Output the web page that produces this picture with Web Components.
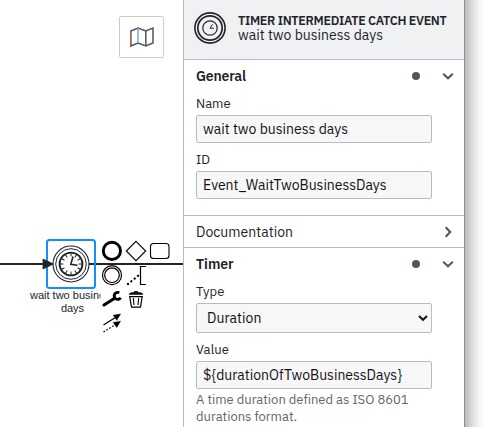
<!DOCTYPE html>
<html lang="en"><head><meta charset="utf-8"><title>Process modeler</title>
<style>
html,body{margin:0;height:100%;overflow:hidden;background:#fff}
body{font-family:"IBM Plex Sans",Roboto,"Liberation Sans",sans-serif;color:#22242a}
</style></head><body>
<modeler-app></modeler-app>
<script>
class Base extends HTMLElement{
  constructor(){super();this.attachShadow({mode:'open'}).innerHTML=this.render();}
  render(){return '';}
}
/* One line of text tracked out to a given width. */
customElements.define('fit-text',class extends Base{
  render(){return '<style>:host{display:block;white-space:pre;line-height:inherit}span{display:block;width:max-content}</style><span><slot></slot></span>';}
  connectedCallback(){
    const s=this.shadowRoot.querySelector('span'),w=+this.getAttribute('w');
    const n=this.textContent.length;
    s.style.letterSpacing=((w-s.getBoundingClientRect().width)/n)+'px';
  }
});
customElements.define('diagram-canvas',class extends Base{
  render(){return `<style>:host{display:block;position:relative;overflow:hidden}
  svg{position:absolute;left:0;top:0;display:block}
  .map{position:absolute;left:119px;top:16px;width:43px;height:40px;border:1px solid #ccc;border-radius:2px;background:#fff}
  text{font:11px "Liberation Sans",Arial,sans-serif;fill:#22242a}</style>
  <svg width="183" height="427" viewBox="0 0 183 427" fill="none" stroke="#22242a">
   <path d="M0 264H45M89 264H183" stroke-width="1.8"/>
   <circle cx="71" cy="264" r="18" fill="#fff" stroke-width="1.1"/>
   <circle cx="71" cy="264" r="15.3" stroke-width="1"/>
   <circle cx="71" cy="264" r="11.4" stroke-width="1.9"/>
   <g stroke-width="1"><path d="M71 253v3.4M71 271.6v3.4M60 264h3.4M78.6 264h3.4"/><path d="M71 253v3.4M71 271.6v3.4M60 264h3.4M78.6 264h3.4" transform="rotate(30 71 264)"/><path d="M71 253v3.4M71 271.6v3.4M60 264h3.4M78.6 264h3.4" transform="rotate(60 71 264)"/></g>
   <path d="M73 256.5L70.8 264.3L77.5 265.3" stroke-width="1.6"/>
   <rect x="47" y="240" width="48" height="48" rx="2.5" stroke="#1090ff" stroke-width="2"/>
   <path d="M43 259L53.5 264L43 269Z" fill="#22242a" stroke="#22242a" stroke-width=".8"/>
   <g stroke="none"><text x="30" y="299">wait two business</text><text x="72.5" y="312" text-anchor="middle">days</text></g>
   <path d="M100.5 240h73v22.5h-73zM100.5 265.3h47v44h-47z" fill="#fff" stroke="none"/>
   <g stroke="#000">
    <circle cx="111.9" cy="250.9" r="8.6" stroke-width="2.9"/>
    <path d="M136 241.3l9.7 9.7l-9.7 9.7l-9.7-9.7z" stroke-width="1.1"/>
    <rect x="150.5" y="243.5" width="18.5" height="15" rx="3" stroke-width="1.1"/>
    <circle cx="112" cy="275.2" r="9.5" stroke-width="1.2"/><circle cx="112" cy="275.2" r="7.3" stroke-width="1.2"/>
    <path d="M146 266.5h-5.5v18H146" stroke-width="1.2"/>
    <path d="M128 284L139 275" stroke-width="2.3" stroke-linecap="round" stroke-dasharray=".01 4.3"/>
    <path d="M104 305L113.5 299" stroke-width="3.2" stroke-linecap="round"/>
    <path d="M113 299L116 297.2" stroke-width="2"/>
    <path d="M119.3 292.8a3.5 3.5 0 1 0 1.3 5" stroke-width="2.9"/>
    <path d="M129 294.5c0-1.5 3-2.2 7-2.2s7 .7 7 2.2z" fill="#000" stroke-width=".4"/>
    <path d="M134 291.8h4" stroke-width="1.2"/>
    <path d="M129.7 296.7h12.5l-1.7 10.5h-9z" stroke-width="1.2"/>
    <path d="M133.3 298l.7 7M138.7 298l-.7 7" stroke-width="1.1"/>
    <path d="M103.5 325L115 317.8" stroke-width="1.2"/><path d="M103.5 332L115 324.8" stroke-width="1.2" stroke-dasharray="1.7 1.7"/>
    <path d="M120.5 314l-7.3 1.3l3.6 5zM120.5 321.2l-7.3 1.3l3.6 5z" fill="#000" stroke-width=".5"/>
   </g>
  </svg>
  <div class="map"><svg width="43" height="40" viewBox="0 0 43 40" fill="none" stroke="#52555f" stroke-width="1.5"><path d="M10.8 14L18 11L25.8 14L33 11V26L25.8 29L18 26L10.8 29Z"/><path d="M25.8 14V29"/><path d="M18 11V26" stroke="#6aaede"/><path d="M10.8 14V29" stroke="#b86b45" stroke-width="1.1"/></svg></div>`;}
});
customElements.define('panel-header',class extends Base{
  render(){return `<style>:host{display:flex;box-sizing:border-box;height:60px;background:#eff1f3;border-bottom:1px solid #b9b9c8;padding:12px 0 0 10px;gap:12px}
  svg{flex:none;display:block}.t{font-size:12.5px;font-weight:600;line-height:16px}.n{font-size:14px;line-height:15px}</style>
  <svg width="32" height="32" viewBox="0 0 32 32" fill="none" stroke="#22242a"><circle cx="16" cy="16" r="15.1" stroke-width="1.6"/><circle cx="16" cy="16" r="12.2" stroke-width="1.7"/><circle cx="16" cy="16" r="7.2" stroke-width="1.2"/><path d="M18.5 12.3L16 16.2h4" stroke-width="1"/></svg>
  <div><fit-text class="t" w="208.5">TIMER INTERMEDIATE CATCH EVENT</fit-text><fit-text class="n" w="145">wait two business days</fit-text></div>`;}
});
customElements.define('group-title',class extends Base{
  render(){return `<style>:host{display:flex;align-items:center;height:32px;padding:0 9px 0 12px;font-size:14px;line-height:32px;font-weight:600}
  :host([closed]){font-weight:400}
  slot{display:block}.s{flex:1}.dot{width:8px;height:8px;border-radius:50%;background:#52555f;margin-right:21px}:host([closed]) .dot{display:none}:host([closed]) svg{transform:rotate(-90deg)}svg{display:block}</style>
  <slot></slot><i class="s"></i><i class="dot"></i><svg width="14" height="14" viewBox="0 0 14 14" fill="none" stroke="#52555f" stroke-width="2.1"><path d="M2.2 4.7L7 9.2L11.8 4.7"/></svg>`;}
});
customElements.define('form-field',class extends Base{
  render(){return `<style>:host{display:block;padding:0 32px 0 12px}
  .l{font-size:13px;line-height:18px;height:20px;box-sizing:border-box}
  .b{display:flex;align-items:center;justify-content:space-between;box-sizing:border-box;height:28px;border:1px solid #b9b9c8;border-radius:2px;background:#f7f7f8;padding:0 3px 0 6px;font-size:14px;line-height:26px;color:#111}
  svg{display:none}:host([select]) svg{display:block}:host([select]) .b{height:30px;padding-left:10px}</style>
  <div class="l"><slot name="label"></slot></div><div class="b"><slot></slot><svg width="10" height="8" viewBox="0 0 10 8" fill="none" stroke="#111" stroke-width="2"><path d="M1 2L5 5.8L9 2"/></svg></div><slot name="hint"></slot>`;}
});
customElements.define('properties-panel',class extends Base{
  render(){return `<style>:host{display:block;box-sizing:border-box;border-left:1px solid #b9b9c8;background:#fff}
  .g{border-bottom:1px solid #b9b9c8;box-sizing:border-box}.one{height:156px}.two{height:32px}.two group-title{height:31px}
  form-field{margin-bottom:8px}.first{margin-top:3px}
  .h{font-size:13px;line-height:17px;color:#62656e}.hint{padding-top:2px}</style>
  <panel-header></panel-header>
  <div class="g one"><group-title><fit-text w="50">General</fit-text></group-title>
   <form-field class="first"><fit-text slot="label" w="34.5">Name</fit-text><fit-text w="145">wait two business days</fit-text></form-field>
   <form-field><fit-text slot="label" w="14">ID</fit-text><fit-text w="183.5">Event_WaitTwoBusinessDays</fit-text></form-field></div>
  <div class="g two"><group-title closed><fit-text w="97">Documentation</fit-text></group-title></div>
  <div><group-title><fit-text w="37.5">Timer</fit-text></group-title>
   <form-field class="first" select><fit-text slot="label" w="28.5">Type</fit-text><fit-text w="54.5">Duration</fit-text></form-field>
   <form-field><fit-text slot="label" w="33">Value</fit-text><fit-text w="199">\${durationOfTwoBusinessDays}</fit-text>
    <div slot="hint" class="hint"><fit-text class="h" w="212.5">A time duration defined as ISO 8601</fit-text><fit-text class="h" w="101">durations format.</fit-text></div></form-field></div>`;}
});
customElements.define('modeler-app',class extends Base{
  render(){return `<style>:host{display:grid;grid-template-columns:183px 281px 26px;width:490px;height:427px;overflow:hidden}
  .edge{background:linear-gradient(90deg,#8f8f8f 0 1px,#bcbcbc 1px,#cdcdcd 5px,#e4e4e4 10px,#f6f6f6 15px,#fff 21px)}</style>
  <diagram-canvas></diagram-canvas><properties-panel></properties-panel><div class="edge"></div>`;}
});
</script></body></html>
